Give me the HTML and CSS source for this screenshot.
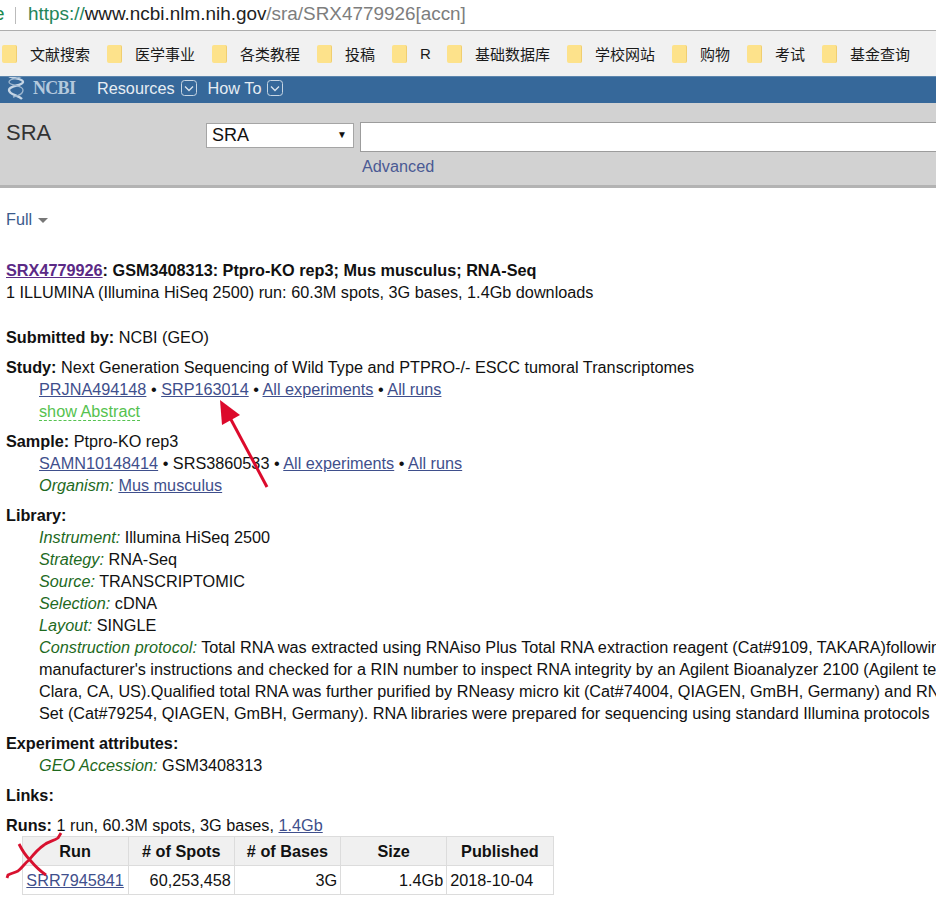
FILE: index.html
```html
<!DOCTYPE html>
<html>
<head>
<meta charset="utf-8">
<title>SRX4779926</title>
<link rel="stylesheet" href="styles.css">
</head>
<body>

<div class="urlbar">
  <span class="cut">e</span>
  <span class="sep"></span>
  <span class="url"><span class="scheme">https://</span><span class="host">www.ncbi.nlm.nih.gov</span>/sra/SRX4779926[accn]</span>
</div>

<div class="bookmarks">
  <div class="bm w105"><i class="folder"></i><span>文献搜索</span></div>
  <div class="bm w105"><i class="folder"></i><span>医学事业</span></div>
  <div class="bm w105"><i class="folder"></i><span>各类教程</span></div>
  <div class="bm w75"><i class="folder"></i><span>投稿</span></div>
  <div class="bm w55"><i class="folder"></i><span>R</span></div>
  <div class="bm w120"><i class="folder"></i><span>基础数据库</span></div>
  <div class="bm w105"><i class="folder"></i><span>学校网站</span></div>
  <div class="bm w75"><i class="folder"></i><span>购物</span></div>
  <div class="bm w75"><i class="folder"></i><span>考试</span></div>
  <div class="bm"><i class="folder"></i><span>基金查询</span></div>
</div>

<div class="ncbibar">
  <svg class="helix" width="20" height="26" viewBox="0 0 20 26">
    <path d="M3 1c4 3 14 2 14 6 0 4-14 3-14 8 0 5 9 5 13 9" fill="none" stroke="#c6d6e5" stroke-width="2.400"/>
    <path d="M16 1c-3 3-13 2-13 6 0 4 14 3 14 8 0 5-6 6-10 7" fill="none" stroke="#9db6cf" stroke-width="1.300"/>
  </svg>
  <span class="logo">NCBI</span>
  <a class="menu">Resources</a>
  <svg class="drop" width="16" height="16" viewBox="0 0 16 16"><rect x="0.500" y="0.500" width="15" height="15" rx="3" fill="none" stroke="#c6d5e3"/><path d="M4 6.500 8 10.500l4-4" fill="none" stroke="#dbe5ee" stroke-width="1.300"/></svg>
  <a class="menu howto">How To</a>
  <svg class="drop" width="16" height="16" viewBox="0 0 16 16"><rect x="0.500" y="0.500" width="15" height="15" rx="3" fill="none" stroke="#c6d5e3"/><path d="M4 6.500 8 10.500l4-4" fill="none" stroke="#dbe5ee" stroke-width="1.300"/></svg>
</div>

<div class="searchbar">
  <div class="dbname">SRA</div>
  <div class="searchform">
    <div class="searchrow">
      <div class="dbselect"><span>SRA</span><b>▼</b></div>
      <div class="term"></div>
    </div>
    <a class="advanced">Advanced</a>
  </div>
</div>

<div class="content">
  <div class="full">Full <i class="caret"></i></div>

  <p class="title"><a class="visited">SRX4779926</a>: GSM3408313: Ptpro-KO rep3; Mus musculus; RNA-Seq</p>
  <p class="line">1 ILLUMINA (Illumina HiSeq 2500) run: 60.3M spots, 3G bases, 1.4Gb downloads</p>

  <p class="line submitted"><b>Submitted by:</b> NCBI (GEO)</p>

  <p class="line gap8"><b>Study:</b> Next Generation Sequencing of Wild Type and PTPRO-/- ESCC tumoral Transcriptomes</p>
  <p class="line in"><a>PRJNA494148</a> • <a>SRP163014</a> • <a>All experiments</a> • <a>All runs</a></p>
  <p class="line in"><a class="abstract">show Abstract</a></p>

  <p class="line gap8"><b>Sample:</b> Ptpro-KO rep3</p>
  <p class="line in"><a>SAMN10148414</a> • SRS3860533 • <a>All experiments</a> • <a>All runs</a></p>
  <p class="line in"><em>Organism:</em> <a>Mus musculus</a></p>

  <p class="line gap8"><b>Library:</b></p>
  <p class="line in"><em>Instrument:</em> Illumina HiSeq 2500</p>
  <p class="line in"><em>Strategy:</em> RNA-Seq</p>
  <p class="line in"><em>Source:</em> TRANSCRIPTOMIC</p>
  <p class="line in"><em>Selection:</em> cDNA</p>
  <p class="line in"><em>Layout:</em> SINGLE</p>
  <p class="line in"><em>Construction protocol:</em> Total RNA was extracted using RNAiso Plus Total RNA extraction reagent (Cat#9109, TAKARA)following</p>
  <p class="line in">manufacturer's instructions and checked for a RIN number to inspect RNA integrity by an Agilent Bioanalyzer 2100 (Agilent technologies, Santa</p>
  <p class="line in">Clara, CA, US).Qualified total RNA was further purified by RNeasy micro kit (Cat#74004, QIAGEN, GmBH, Germany) and RNase-Free DNase</p>
  <p class="line in">Set (Cat#79254, QIAGEN, GmBH, Germany). RNA libraries were prepared for sequencing using standard Illumina protocols</p>

  <p class="line gap8"><b>Experiment attributes:</b></p>
  <p class="line in"><em>GEO Accession:</em> GSM3408313</p>

  <p class="line gap8"><b>Links:</b></p>

  <p class="line runs"><b>Runs:</b> 1 run, 60.3M spots, 3G bases, <a>1.4Gb</a></p>
  <table class="runtable">
    <tr><th>Run</th><th># of Spots</th><th># of Bases</th><th>Size</th><th>Published</th></tr>
    <tr><td class="ctr"><a>SRR7945841</a></td><td>60,253,458</td><td>3G</td><td>1.4Gb</td><td class="left">2018-10-04</td></tr>
  </table>
</div>

<!-- hand drawn marks on top of the screenshot -->
<svg class="marks" width="936" height="908" viewBox="0 0 936 908">
  <path d="M267 487 228 414" fill="none" stroke="#dc0a2c" stroke-width="3"/>
  <path d="M220 400 240 415 222 425Z" fill="#dc0a2c"/>
  <path d="M7 878 8 875C12 873 14 873 18 871 22 868 25 863 29 860 33 855 38 849 44 845 49 841 54 841 58 838L61 833" fill="none" stroke="#d8112f" stroke-width="2.800"/>
  <path d="M19 844C22 850 25 855 30 860 35 866 40 871 46 875" fill="none" stroke="#d8112f" stroke-width="2.800"/>
</svg>

</body>
</html>
```

FILE: styles.css
```css
html, body {
    margin: 0;
    padding: 0;
    height: 908px;
    overflow: hidden;
}
body {
    position: relative;
    width: 936px;
    background: #fff;
    color: #111;
    font-family: "Liberation Sans", "Noto Sans CJK SC", sans-serif;
    font-size: 16.24px;
}
p { margin: 0; }

.urlbar {
    height: 30px;
    border-bottom: 1px solid #aeaeae;
    display: flex;
    align-items: center;
    font-size: 18.9px;
    color: #7d7d7d;
    white-space: nowrap;
}
.cut { color: #1d8a4f; width: 15px; margin-left: -6px; margin-right: 6px; margin-top: -2px; }
.sep { width: 1px; height: 17px; background: #bbb; margin-right: 12px; }
.url { margin-top: -2px; }
.scheme { color: #23855a; }
.host { color: #222; }

.bookmarks {
    height: 45px;
    background: #f1f1f1;
    display: flex;
    align-items: center;
    padding-left: 2px;
    font-size: 15px;
    color: #1a1a1a;
    white-space: nowrap;
}
.bm { display: flex; align-items: center; flex: none; }
.w55 { width: 55px; }
.w75 { width: 75px; }
.w105 { width: 105px; }
.w120 { width: 120px; }
.folder {
    width: 15px;
    height: 18px;
    margin-right: 13px;
    background: #fde28b;
    border-radius: 2px;
    border-right: 1px solid #f0ce70;
    box-sizing: border-box;
}

.ncbibar {
    height: 27px;
    background: #36689a;
    border-top: 1px solid #5d86ad;
    box-sizing: border-box;
    display: flex;
    align-items: center;
    padding: 0 0 4px 6px;
    color: #e6edf3;
    overflow: hidden;
}
.helix { margin-top: 0; flex: none; }
.logo {
    font-family: "Liberation Serif", serif;
    font-size: 18px;
    font-weight: bold;
    color: #b4c9dd;
    margin-left: 7px;
    width: 44px;
    letter-spacing: -0.7px;
}
.menu {
    color: #e6edf3;
    text-decoration: none;
    margin-left: 20px;
    margin-right: 6px;
}
.howto { margin-left: 11px; }
.drop { flex: none; }

.searchbar {
    height: 85px;
    box-sizing: border-box;
    background: #d2d2d2;
    border-bottom: 3px solid #b3b3b3;
    display: flex;
    overflow: hidden;
}
.dbname {
    font-size: 22px;
    color: #333;
    padding: 17px 0 0 6px;
    width: 200px;
    flex: none;
}
.searchform { flex: 1; padding-top: 19px; }
.searchrow { display: flex; gap: 6px; }
.dbselect {
    width: 148px;
    height: 25px;
    margin-top: 1px;
    box-sizing: border-box;
    background: #fff;
    border: 1px solid #a5a5a5;
    display: flex;
    justify-content: space-between;
    align-items: center;
    padding: 0 6px 0 5px;
    font-size: 18px;
    color: #111;
}
.dbselect b { font-size: 10px; font-weight: normal; margin-top: -3px; }
.term {
    flex: 1;
    height: 30px;
    box-sizing: border-box;
    background: #fff;
    border: 1px solid #9c9c9c;
    border-right: 0;
}
a.advanced { display: block; margin: 5px 0 0 156px; color: #4a5a94; text-decoration: none; }

.content {
    white-space: nowrap;
    overflow: hidden;
    padding-left: 6px;
}
.full { color: #3b5a8c; margin-top: 20px; height: 22px; line-height: 22px; }
.caret {
    display: inline-block;
    width: 0;
    height: 0;
    border: 5px solid transparent;
    border-top: 5px solid #777;
    border-bottom: 0;
    margin-left: 1px;
    vertical-align: 2px;
}
.title { margin-top: 29px; font-weight: bold; line-height: 22px; }
.line { line-height: 22px; }
.line b { color: #111; }
.submitted { margin-top: 23px; }
.gap8 { margin-top: 8px; }
.in { padding-left: 33px; }
a { color: #3f4f8c; text-decoration: underline; }
a.visited { color: #5b2a86; }
a.abstract { color: #55c24f; text-decoration: none; border-bottom: 1px dashed #55c24f; }
em { color: #1e6a1e; font-style: italic; }
.runs { margin-top: 8px; }

.runtable {
    border-collapse: collapse;
    table-layout: fixed;
    width: 532px;
    margin-left: 15.5px;
    font-size: 16.24px;
}
.runtable th, .runtable td {
    border: 1px solid #dcdcdc;
    height: 29px;
    padding: 0 3px;
    box-sizing: border-box;
}
.runtable th { background: #f0f0f0; color: #111; text-align: center; }
.runtable td { text-align: right; }
.runtable td.ctr { text-align: center; }
.runtable td.left { text-align: left; }

.marks { position: absolute; left: 0; top: 0; pointer-events: none; }
```
